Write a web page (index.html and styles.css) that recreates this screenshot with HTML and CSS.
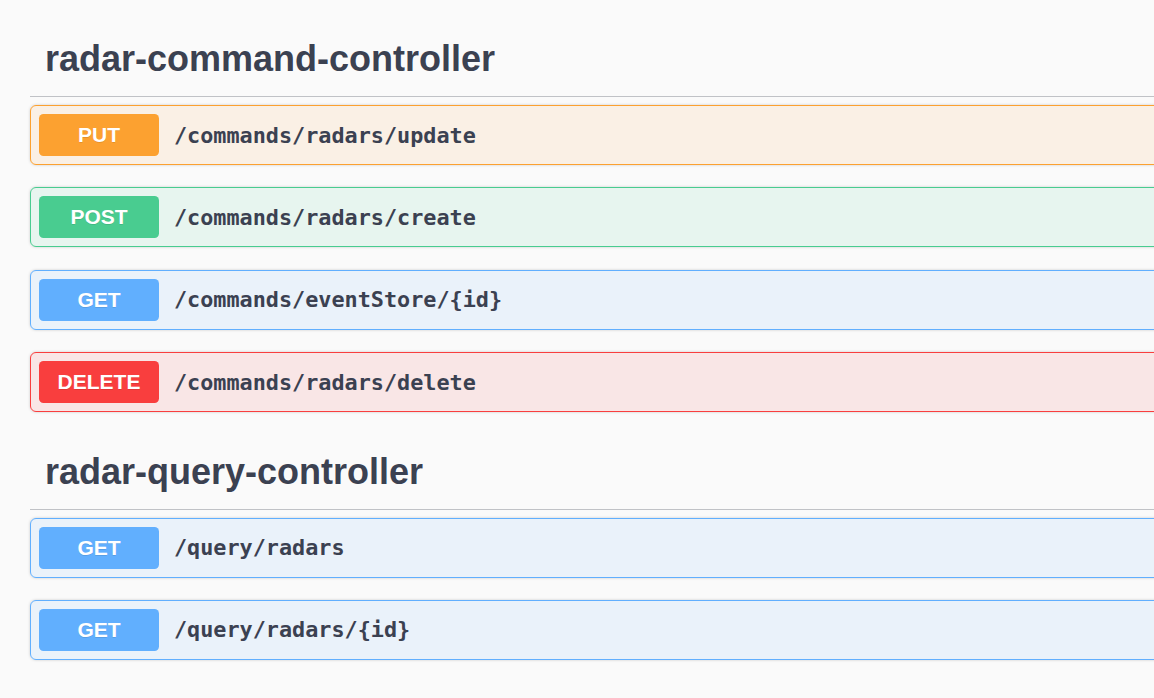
FILE: index.html
```html
<!DOCTYPE html>
<html>
<head>
<meta charset="utf-8">
<link rel="stylesheet" href="styles.css">
</head>
<body>
<div class="wrapper">
  <section class="tag-section">
    <h3 class="tag">radar-command-controller</h3>
    <div class="opblock put"><span class="method">PUT</span><span class="path">/commands/radars/update</span></div>
    <div class="opblock post"><span class="method">POST</span><span class="path">/commands/radars/create</span></div>
    <div class="opblock get"><span class="method">GET</span><span class="path">/commands/eventStore/{id}</span></div>
    <div class="opblock delete"><span class="method">DELETE</span><span class="path">/commands/radars/delete</span></div>
  </section>
  <section class="tag-section">
    <h3 class="tag">radar-query-controller</h3>
    <div class="opblock get"><span class="method">GET</span><span class="path">/query/radars</span></div>
    <div class="opblock get"><span class="method">GET</span><span class="path">/query/radars/{id}</span></div>
  </section>
</div>
</body>
</html>
```

FILE: styles.css
```css
html, body {
  margin: 0;
  padding: 0;
  background: #fafafa;
  overflow: hidden;
}
.wrapper {
  padding: 22px 0 0 30px;
  width: 1160px;
}
.tag-section {
  margin-bottom: 0;
}
.tag {
  margin: 0 0 8px 0;
  padding: 17px 0 17px 15px;
  font-family: "Liberation Sans", Arial, sans-serif;
  font-weight: 700;
  font-size: 36px;
  line-height: 40px;
  color: #3b4151;
  border-bottom: 1px solid rgba(59, 65, 81, 0.3);
}
.opblock {
  display: flex;
  align-items: center;
  box-sizing: border-box;
  height: 60px;
  padding: 0 8px;
  margin-bottom: 22.4px;
  border: 1px solid;
  border-radius: 6px;
  box-shadow: 0 0 3px rgba(0, 0, 0, 0.19);
}
.method {
  width: 120px;
  height: 42px;
  line-height: 42px;
  flex: none;
  text-align: center;
  border-radius: 4.5px;
  color: #fff;
  font-family: "Liberation Sans", Arial, sans-serif;
  font-weight: 700;
  font-size: 21px;
  text-shadow: 0 1px 0 rgba(0, 0, 0, 0.1);
}
.path {
  padding-left: 15px;
  font-family: "DejaVu Sans Mono", monospace;
  font-weight: 700;
  font-size: 21.8px;
  color: #3b4151;
}
.put { border-color: #fca130; background: rgba(252, 161, 48, 0.1); }
.put .method { background: #fca130; }
.post { border-color: #49cc90; background: rgba(73, 204, 144, 0.1); }
.post .method { background: #49cc90; }
.get { border-color: #61affe; background: rgba(97, 175, 254, 0.1); }
.get .method { background: #61affe; }
.delete { border-color: #f93e3e; background: rgba(249, 62, 62, 0.1); }
.delete .method { background: #f93e3e; }
```
